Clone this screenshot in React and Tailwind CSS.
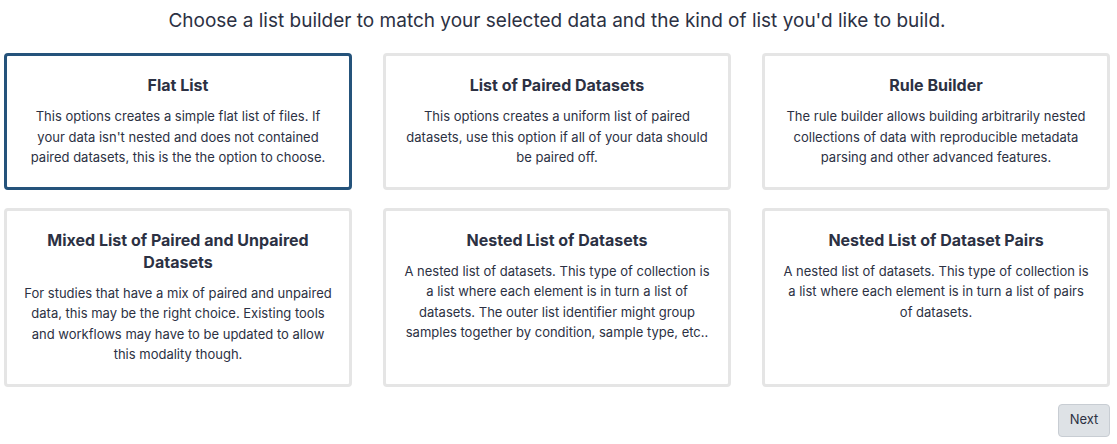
const options = [
  {
    title: "Flat List",
    lines: [
      "This options creates a simple flat list of files. If",
      "your data isn't nested and does not contained",
      "paired datasets, this is the the option to choose.",
    ],
    selected: true,
  },
  {
    title: "List of Paired Datasets",
    lines: [
      "This options creates a uniform list of paired",
      "datasets, use this option if all of your data should",
      "be paired off.",
    ],
  },
  {
    title: "Rule Builder",
    lines: [
      "The rule builder allows building arbitrarily nested",
      "collections of data with reproducible metadata",
      "parsing and other advanced features.",
    ],
  },
  {
    title: "Mixed List of Paired and Unpaired Datasets",
    lines: [
      "For studies that have a mix of paired and unpaired",
      "data, this may be the right choice. Existing tools",
      "and workflows may have to be updated to allow",
      "this modality though.",
    ],
  },
  {
    title: "Nested List of Datasets",
    lines: [
      "A nested list of datasets. This type of collection is",
      "a list where each element is in turn a list of",
      "datasets. The outer list identifier might group",
      "samples together by condition, sample type, etc..",
    ],
  },
  {
    title: "Nested List of Dataset Pairs",
    lines: [
      "A nested list of datasets. This type of collection is",
      "a list where each element is in turn a list of pairs",
      "of datasets.",
    ],
  },
];

function OptionCard({ title, lines, selected }) {
  return (
    <div
      className={
        selected
          ? "rounded-[4px] border-[3px] border-[#25537b] bg-white px-[8px] pt-[18px] pb-[19px] text-center"
          : "rounded-[4px] border-[3px] border-[#e5e5e5] bg-white px-[8px] pt-[18px] pb-[19px] text-center"
      }
    >
      <h3 className="px-[12px] text-[16px] font-bold leading-[22px] text-[#2c3143]">{title}</h3>
      <p className="mt-[10px] text-[13px] leading-[20.5px] text-[#2c3143]">
        {lines.map((l) => (
          <span key={l} className="block whitespace-nowrap">
            {l}
          </span>
        ))}
      </p>
    </div>
  );
}

export default function App() {
  return (
    <div
      className="min-h-[444px] w-full bg-white pl-[4px] pr-[7px]"
      style={{ fontFamily: "Inter, 'Noto Sans', sans-serif" }}
    >
      <h2 className="pt-[7px] text-center text-[19px] leading-[27px] text-[#2c3143]">
        Choose a list builder to match your selected data and the kind of list you'd like to build.
      </h2>
      <div className="mt-[19px] grid grid-cols-3 gap-x-[31px] gap-y-[18px]">
        {options.map((o) => (
          <OptionCard key={o.title} {...o} />
        ))}
      </div>
      <div className="mt-[17px] flex justify-end">
        <button className="h-[33px] w-[52px] rounded-[4px] border border-[#c8cdd3] bg-[#dee2e6] text-[13px] text-[#2c3143]">
          Next
        </button>
      </div>
    </div>
  );
}
